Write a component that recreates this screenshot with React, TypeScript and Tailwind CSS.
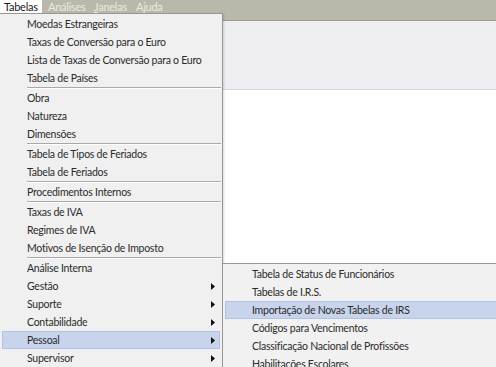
import React from 'react';

type Entry = { label: string; sub?: boolean; active?: boolean } | 'sep';

const mainItems: Entry[] = [
  { label: 'Moedas Estrangeiras' },
  { label: 'Taxas de Conversão para o Euro' },
  { label: 'Lista de Taxas de Conversão para o Euro' },
  { label: 'Tabela de Países' },
  'sep',
  { label: 'Obra' },
  { label: 'Natureza' },
  { label: 'Dimensões' },
  'sep',
  { label: 'Tabela de Tipos de Feriados' },
  { label: 'Tabela de Feriados' },
  'sep',
  { label: 'Procedimentos Internos' },
  'sep',
  { label: 'Taxas de IVA' },
  { label: 'Regimes de IVA' },
  { label: 'Motivos de Isenção de Imposto' },
  'sep',
  { label: 'Análise Interna' },
  { label: 'Gestão', sub: true },
  { label: 'Suporte', sub: true },
  { label: 'Contabilidade', sub: true },
  { label: 'Pessoal', sub: true, active: true },
  { label: 'Supervisor', sub: true },
];

const subItems: Entry[] = [
  { label: 'Tabela de Status de Funcionários' },
  { label: 'Tabelas de I.R.S.' },
  { label: 'Importação de Novas Tabelas de IRS', active: true },
  { label: 'Códigos para Vencimentos' },
  { label: 'Classificação Nacional de Profissões' },
  { label: 'Habilitações Escolares' },
];

const Arrow = () => (
  <svg width="4" height="7" viewBox="0 0 4 7" className="absolute right-[5px] top-[6px]">
    <path d="M0 0 L4 3.5 L0 7 Z" fill="#111" />
  </svg>
);

const MenuList = ({ items, textPad }: { items: Entry[]; textPad: string }) => (
  <>
    {items.map((it, i) =>
      it === 'sep' ? (
        <div key={i} className="h-[2px] ml-[27px] mr-[1px]">
          <div className="h-[1px] bg-[#a9a9a9]" />
          <div className="h-[1px] bg-white" />
        </div>
      ) : (
        <div
          key={i}
          className={`relative h-[18px] leading-[18px] mx-[2px] whitespace-nowrap ${
            it.active ? 'bg-[#c8d4ec] outline outline-1 outline-[#b3c2e2] -outline-offset-1' : ''
          }`}
        >
          <span className={`block ${textPad}`}>{it.label}</span>
          {it.sub && <Arrow />}
        </div>
      )
    )}
  </>
);

export default function App() {
  return (
    <div
      className="relative w-[496px] h-[367px] overflow-hidden bg-white text-[10.5px] tracking-[-0.25px] text-[#2b2b2b]"
      style={{ fontFamily: 'Lato, "Noto Sans", sans-serif' }}
    >
      {/* menu bar */}
      <div className="flex h-[21px] bg-[#b9b8aa] border-b border-[#9c9b90] text-[#eceae2] text-[11px]">
        <div className="w-[42px] h-[14px] leading-[13px] pl-[4px] bg-white text-[#1a1a1a]">Tabelas</div>
        <div className="w-[46px] h-[14px] leading-[13px] pl-[6px]">Análises</div>
        <div className="w-[42px] h-[14px] leading-[13px] pl-[6px]">
          <span className="underline">J</span>anelas
        </div>
        <div className="h-[14px] leading-[13px] pl-[6px]">Ajuda</div>
      </div>

      {/* toolbar area */}
      <div className="h-[69px] bg-[#efeef2] border-b border-[#d9d8dd]" />

      {/* Tabelas dropdown */}
      <div className="absolute left-0 top-[13px] w-[223px] pt-[1px] bg-[#f0f0f0] border-t border-r border-b border-[#979797] shadow-[1px_1px_2px_rgba(0,0,0,0.15)]">
        <MenuList items={mainItems} textPad="pl-[25px]" />
      </div>

      {/* Pessoal submenu */}
      <div className="absolute left-[222px] top-[263px] w-[290px] pt-[1px] bg-[#f1f1f1] border border-[#979797]">
        <MenuList items={subItems} textPad="pl-[27px]" />
      </div>
    </div>
  );
}
